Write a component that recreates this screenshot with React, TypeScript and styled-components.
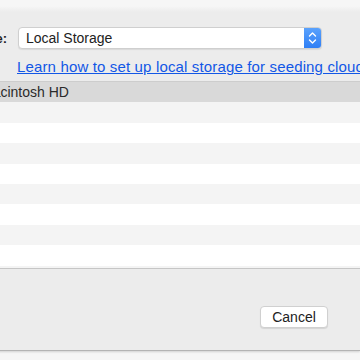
import styled, { createGlobalStyle } from "styled-components";

const GlobalStyle = createGlobalStyle`
  html, body {
    margin: 0;
    padding: 0;
    width: 360px;
    height: 360px;
    overflow: hidden;
    background: #f6f6f6;
    font-family: "Liberation Sans", Arial, sans-serif;
  }
`;

const Sheet = styled.div`
  width: 440px;
  height: 350px;
  margin-left: -80px;
  display: flex;
  flex-direction: column;
  background: #ececec;
  border-bottom: 1px solid #b4b4b4;
  box-shadow: 0 1px 2px rgba(0, 0, 0, 0.15);
  overflow: hidden;
`;

const TopShade = styled.div`
  height: 12px;
  background: linear-gradient(#f6f6f6 0, #f6f6f6 6px, #ececec 12px);
`;

const FormRow = styled.div`
  display: flex;
  align-items: center;
  height: 22px;
  margin-top: 15px;
  gap: 11px;
`;

const Label = styled.span`
  width: 87px;
  text-align: right;
  font-size: 13px;
  font-weight: bold;
  color: #222;
`;

const Popup = styled.div`
  width: 304px;
  height: 22px;
  box-sizing: border-box;
  display: flex;
  align-items: stretch;
  background: #fff;
  border: 1px solid #cfcfcf;
  border-radius: 4px;
  box-shadow: 0 1px 1px rgba(0, 0, 0, 0.08);
  overflow: hidden;
`;

const PopupText = styled.span`
  flex: 1;
  padding-left: 7px;
  font-size: 14px;
  line-height: 20px;
  color: #222;
`;

const Stepper = styled.div`
  width: 17px;
  display: flex;
  align-items: center;
  justify-content: center;
  background: linear-gradient(#5aa2fd, #2f7ff5);
`;

const LinkRow = styled.div`
  margin-top: 8px;
  padding-left: 97px;
  height: 24px;
  white-space: nowrap;
`;

const LearnLink = styled.a`
  font-size: 15px;
  letter-spacing: 0.15px;
  line-height: 20px;
  color: #1257e6;
  text-decoration: underline;
`;

const Table = styled.div`
  height: 188px;
  box-sizing: border-box;
  border-top: 1px solid #cdcdcd;
  border-bottom: 1px solid #c6c6c6;
  overflow: hidden;
  background: #fff;
`;

const Row = styled.div<{ $kind: "selected" | "odd" | "even" }>`
  height: 20.4px;
  padding-left: 61px;
  font-size: 14px;
  line-height: 20px;
  color: #2a2a2a;
  background: ${(p) =>
    p.$kind === "selected" ? "#d9d9d9" : p.$kind === "odd" ? "#f4f4f4" : "#fff"};
`;

const Footer = styled.div`
  flex: 1;
  display: flex;
  justify-content: flex-end;
  align-items: flex-start;
  padding: 37px 32px 0 0;
`;

const Button = styled.button`
  width: 68px;
  height: 22px;
  padding: 0;
  background: #fff;
  border: 1px solid #d0d0d0;
  border-radius: 4px;
  box-shadow: 0 1px 1px rgba(0, 0, 0, 0.1);
  font-family: "Liberation Sans", Arial, sans-serif;
  font-size: 14px;
  color: #222;
`;

const rows = Array.from({ length: 10 }, (_, i) => i);

export default function App() {
  return (
    <>
      <GlobalStyle />
      <Sheet>
        <TopShade />
        <FormRow>
          <Label>Source:</Label>
          <Popup>
            <PopupText>Local Storage</PopupText>
            <Stepper>
              <svg width="9" height="14" viewBox="0 0 9 14">
                <path
                  d="M1.5 5 L4.5 2 L7.5 5 M1.5 9 L4.5 12 L7.5 9"
                  fill="none"
                  stroke="#fff"
                  strokeWidth="1.4"
                  strokeLinecap="round"
                  strokeLinejoin="round"
                />
              </svg>
            </Stepper>
          </Popup>
        </FormRow>
        <LinkRow>
          <LearnLink href="#">
            Learn how to set up local storage for seeding cloud backups
          </LearnLink>
        </LinkRow>
        <Table>
          {rows.map((i) => (
            <Row key={i} $kind={i === 0 ? "selected" : i % 2 ? "odd" : "even"}>
              {i === 0 ? "Macintosh HD" : ""}
            </Row>
          ))}
        </Table>
        <Footer>
          <Button>Cancel</Button>
        </Footer>
      </Sheet>
    </>
  );
}
